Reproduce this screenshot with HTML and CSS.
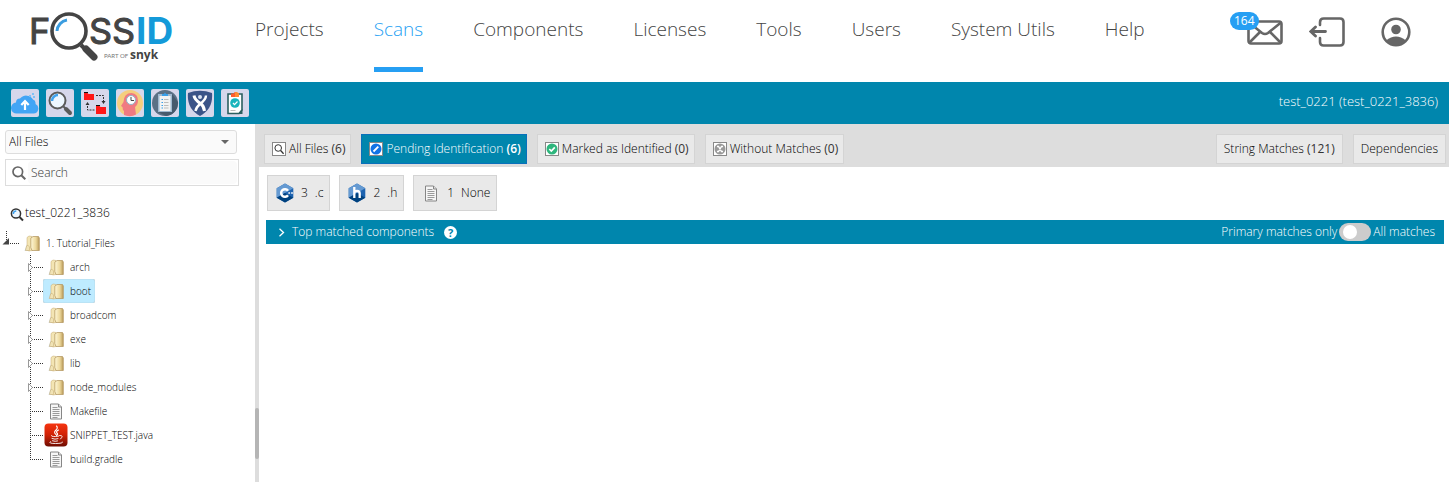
FILE: index.html
```html
<!DOCTYPE html>
<html lang="en">
<head>
<meta charset="utf-8">
<title>FossID Scans</title>
<link rel="stylesheet" href="styles.css">
</head>
<body>
<svg class="defs" aria-hidden="true">
  <defs>
    <linearGradient id="gold" x1="0" x2="1"><stop offset="0" stop-color="#fff8d8"/><stop offset=".6" stop-color="#ecd79a"/><stop offset="1" stop-color="#b99a5a"/></linearGradient>
    <linearGradient id="red" x1="0" y1="0" x2="0" y2="1"><stop offset="0" stop-color="#f63410"/><stop offset=".5" stop-color="#cf2206"/><stop offset="1" stop-color="#6e0d02"/></linearGradient>
    <symbol id="folder" viewBox="0 0 16 17">
      <path d="M.5 15.800L3.500 8l3 2v6z" fill="#c9d2d6"/>
      <path d="M3 2.500L5 1l3 .5v14l-3 .5-2-1z" fill="#f3e5b4" stroke="#c4ab70" stroke-width=".5"/>
      <path d="M6.800 3.200L9 1.500h5.500L15.300 3v12.500H8l-1.200-3z" fill="url(#gold)" stroke="#b0925a" stroke-width=".7"/>
      <path d="M2.500 11l1.500-.8 1.500 1.800v3.500H1.500z" fill="#f1e3b5" stroke="#c4ab70" stroke-width=".5"/>
    </symbol>
    <symbol id="file" viewBox="0 0 14 17">
      <path d="M1.500 1h8l3 3v12h-11z" fill="#f6f6f6" stroke="#868686"/>
      <path d="M9.500 1v3h3" fill="#ddd" stroke="#868686"/>
      <path d="M3.500 4.500h5M3.500 6.500h7M3.500 8.500h7M3.500 10.500h7M3.500 12.500h7M3.500 14.500h5" stroke="#9a9a9a"/>
    </symbol>
    <symbol id="branch" viewBox="0 0 24 24">
      <path d="M11.500 0v24M13 12.500h11" class="dots"/>
      <path d="M9.500 8.500l4 4-4 4z" fill="#fff" stroke="#999"/>
    </symbol>
    <symbol id="leaf" viewBox="0 0 24 24"><path d="M11.500 0v24M13 12.500h11" class="dots"/></symbol>
    <symbol id="last" viewBox="0 0 24 24"><path d="M11.500 0v13M11 12.500h13" class="dots"/></symbol>
    <symbol id="lens" viewBox="0 0 28 28">
      <circle cx="11.500" cy="11.500" r="8" fill="#eef7ff" stroke="#5b5b5b" stroke-width="2"/>
      <path d="M6 12a6 6 0 0 1 6-6" fill="none" stroke="#3fa2ee" stroke-width="2.500"/>
      <path d="M17.500 17.500l2.500 2.500" stroke="#5b5b5b" stroke-width="2"/>
      <path d="M20 20l4 4" stroke="#5b5b5b" stroke-width="4" stroke-linecap="round"/>
    </symbol>
    <symbol id="hex" viewBox="0 0 18 20">
      <path d="M9 .5l8.300 4.800v9.400L9 19.500.7 14.700V5.300z" fill="#1d63b0"/>
      <path d="M9 .5l8.300 4.800L9 10 .7 14.700V5.300z" fill="#659ad2"/>
      <path d="M.7 14.700L9 10l8.300 4.700L9 19.500z" fill="#00427e"/>
    </symbol>
  </defs>
</svg>

<header class="header">
  <a class="logo" href="#" aria-label="FossID part of Snyk">
    <svg width="150" height="56" viewBox="0 0 150 56">
      <g class="logo-text">
        <text x="1" y="36">F</text>
        <text x="61" y="36">SS</text>
        <text class="logo-id" x="108" y="36">ID</text>
      </g>
      <text class="logo-part" x="76" y="50">PART OF</text>
      <text class="logo-snyk" x="102" y="51">snyk</text>
      <circle cx="41" cy="23" r="17" fill="#fff" stroke="#444" stroke-width="3.600"/>
      <path d="M29 23a12 12 0 0 1 10-11" fill="none" stroke="#3b9de0" stroke-width="3"/>
      <path d="M53 37l4 4" stroke="#444" stroke-width="4"/>
      <path d="M58 41l8 8" stroke="#444" stroke-width="7" stroke-linecap="round"/>
    </svg>
  </a>
  <nav class="nav">
    <a href="#">Projects</a>
    <a href="#" class="active">Scans</a>
    <a href="#">Components</a>
    <a href="#">Licenses</a>
    <a href="#">Tools</a>
    <a href="#">Users</a>
    <a href="#">System Utils</a>
    <a href="#">Help</a>
  </nav>
  <div class="account">
    <button class="mail" aria-label="Messages">
      <svg width="36" height="25" viewBox="0 0 36 25" fill="none" stroke="#666" stroke-width="2.600">
        <rect x="1.500" y="1.500" width="33" height="22" rx="2.500"/>
        <path d="M2 2.500l13 10.500q3 2 6 0L34 2.500M2.500 22.500L13 12M33.500 22.500L23 12"/>
      </svg>
      <span class="count">164</span>
    </button>
    <button aria-label="Log out">
      <svg width="36" height="30" viewBox="0 0 36 30" fill="none" stroke="#666" stroke-width="2.600" stroke-linecap="round">
        <path d="M11 8V5.200Q11 1.500 14.700 1.500H31Q34.500 1.500 34.500 5V25q0 3.500-3.500 3.500H14.500Q11 28.500 11 25V21"/>
        <path d="M16.500 14.500H2M6.500 10L1.800 14.500l4.700 4.500" stroke-width="2.800"/>
      </svg>
    </button>
    <button aria-label="Profile">
      <svg width="30" height="30" viewBox="0 0 30 30">
        <circle cx="15" cy="15" r="13.300" fill="#fff" stroke="#666" stroke-width="2.600"/>
        <circle cx="15" cy="12.500" r="4.800" fill="#666"/>
        <path d="M5 23.500q10-8 20 0A13 13 0 0 1 5 23.500z" fill="#666"/>
      </svg>
    </button>
  </div>
</header>

<div class="toolbar">
  <div class="tools">
    <button aria-label="Upload"><svg viewBox="0 0 28 28">
      <path d="M6 24.500a5.500 5.500 0 0 1-1-11 4 4 0 0 1 4-4A8 8 0 0 1 22 10.500q3 1 2.500 4.500a5 5 0 0 1-2 9.500z" fill="#42a5f5"/>
      <path d="M14 21v-7M10.300 16l3.700-4 3.700 4" fill="none" stroke="#fff" stroke-width="2.200"/>
      <path d="M18 6h2v2h-2zM21 4h2v2h-2zM22 7h2v2h-2z" fill="#7fc1f5"/></svg></button>
    <button aria-label="Scan"><svg viewBox="0 0 28 28"><use href="#lens"/></svg></button>
    <button aria-label="Compare folders"><svg viewBox="0 0 28 28">
      <path d="M3 3h4v1H3zM15 16h4v1h-4z" fill="#111"/><path d="M3 4h3.500l1 1H13v6H3zM15 17h3.500l1 1H25v7H15z" fill="#ff1717"/>
      <path d="M15 6.500h7.500V13M6.500 14v7h7" fill="none" stroke="#333" stroke-dasharray="2 1"/>
      <path d="M20.500 12h4l-2 3zM4.500 16h4l-2-3z" fill="#333"/></svg></button>
    <button aria-label="Knowledge"><svg viewBox="0 0 28 28">
      <circle cx="14" cy="14" r="13" fill="#f5ce7e"/>
      <path d="M8 26V21.500H7L6.500 18 5 17l2.500-4Q8 4 15.500 4 22 4.500 22 11.500q0 4-3 6.500l1 7.500Q14 28.500 8 26z" fill="#f07a82"/>
      <circle cx="15" cy="11" r="4.500" fill="#fff" stroke="#8fb5c9"/><path d="M15 8v3.500h3" fill="none" stroke="#444"/></svg></button>
    <button aria-label="Report"><svg viewBox="0 0 28 28">
      <circle cx="14" cy="14" r="13" fill="#5b7186"/><path d="M21 5l6 8a13 13 0 0 1-12 14l-8-4z" fill="#475b6d"/>
      <path d="M7 5h14v18H7z" fill="#9fb9d0"/><path d="M8.500 7h11v15h-11z" fill="#f3f3f3"/><path d="M11 7V5h2q1-2.500 2 0h2v2z" fill="#3a9fe8"/>
      <path d="M10.500 10.500h1.500M10.500 13.500h1.500M10.500 16.500h1.500M10.500 19h1.500" stroke="#3a9fe8"/><path d="M13 10.500h4.500M13 13.500h4.500M13 16.500h4.500M13 19h4.500" stroke="#bbb"/></svg></button>
    <button aria-label="Issue tracker"><svg viewBox="0 0 28 28">
      <path d="M2 4Q14-.5 26 4q1.500 16-12 23Q.5 20 2 4z" fill="#3b5488"/>
      <path d="M8 6.500q.5 4 6.500 8 3.500 2.500 4 7.500" fill="none" stroke="#fff" stroke-width="3"/>
      <path d="M20 6.500q0 4-6 8.500-4 3.500-4.500 7" fill="none" stroke="#fff" stroke-width="2.400"/><circle cx="14" cy="8" r="2" fill="#dbe3f1"/></svg></button>
    <button aria-label="Audit"><svg viewBox="0 0 28 28">
      <path d="M7 5h14v16l-3 3.500H7z" fill="#fff" stroke="#2c5f60" stroke-width="1.600"/><path d="M21.500 20v5H17z" fill="#2c5f60"/>
      <path d="M10 8V4.500h2.500q1.500-3 3 0H18V8z" fill="#ff5b2e"/><path d="M14 3h2l2 1.500V8h-4z" fill="#ff8a33"/>
      <circle cx="14" cy="14" r="4.800" fill="#19b4bd"/><path d="M12 14l1.500 1.700 3-3.200" fill="none" stroke="#fff" stroke-width="1.200"/>
      <path d="M9.500 21.500h5" stroke="#bbb"/></svg></button>
  </div>
  <span>test_0221 (test_0221_3836)</span>
</div>

<div class="workspace">
  <aside class="sidebar">
    <div class="select-wrap">
      <select aria-label="File filter"><option>All Files</option></select>
    </div>
    <label class="search">
      <svg width="14" height="14" viewBox="0 0 14 14" fill="none" stroke="#666" stroke-width="1.700"><circle cx="5.800" cy="5.800" r="4.800"/><path d="M9.300 9.300l4 4" stroke-width="2"/></svg>
      <input type="text" placeholder="Search" aria-label="Search">
    </label>
    <div class="scan-name">
      <svg width="15" height="15" viewBox="0 0 15 15"><circle cx="6" cy="6.500" r="4.600" fill="#eef7ff" stroke="#333" stroke-width="1.500"/><path d="M3.300 7a3 3 0 0 1 3-3" fill="none" stroke="#3fa2ee" stroke-width="1.500"/><path d="M9.500 10l3.500 3.500" stroke="#333" stroke-width="2"/></svg>
      <span>test_0221_3836</span>
    </div>
    <ul class="tree">
      <li>
        <div class="row">
          <button aria-label="Collapse 1. Tutorial_Files"><svg width="19" height="24" viewBox="0 0 19 24"><path d="M6.500 0v9M10 12.500h9" class="dots"/><path d="M9 7v6.500H2.500z" fill="#444"/></svg></button>
          <a href="#"><span class="icon"><svg width="16" height="17"><use href="#folder"/></svg></span>1. Tutorial_Files</a>
        </div>
        <ul>
          <li class="row"><button aria-label="Expand arch"><svg width="24" height="24"><use href="#branch"/></svg></button><a href="#"><span class="icon"><svg width="16" height="17"><use href="#folder"/></svg></span>arch</a></li>
          <li class="row"><button aria-label="Expand boot"><svg width="24" height="24"><use href="#branch"/></svg></button><a href="#" class="selected"><span class="icon"><svg width="16" height="17"><use href="#folder"/></svg></span>boot</a></li>
          <li class="row"><button aria-label="Expand broadcom"><svg width="24" height="24"><use href="#branch"/></svg></button><a href="#"><span class="icon"><svg width="16" height="17"><use href="#folder"/></svg></span>broadcom</a></li>
          <li class="row"><button aria-label="Expand exe"><svg width="24" height="24"><use href="#branch"/></svg></button><a href="#"><span class="icon"><svg width="16" height="17"><use href="#folder"/></svg></span>exe</a></li>
          <li class="row"><button aria-label="Expand lib"><svg width="24" height="24"><use href="#branch"/></svg></button><a href="#"><span class="icon"><svg width="16" height="17"><use href="#folder"/></svg></span>lib</a></li>
          <li class="row"><button aria-label="Expand node_modules"><svg width="24" height="24"><use href="#branch"/></svg></button><a href="#"><span class="icon"><svg width="16" height="17"><use href="#folder"/></svg></span>node_modules</a></li>
          <li class="row"><svg width="24" height="24"><use href="#leaf"/></svg><a href="#"><span class="icon"><svg width="14" height="17"><use href="#file"/></svg></span>Makefile</a></li>
          <li class="row"><svg width="24" height="24"><use href="#leaf"/></svg><a href="#"><span class="icon"><svg width="24" height="24" viewBox="0 0 24 24">
            <rect x=".5" y=".5" width="23" height="23" rx="4" fill="url(#red)"/>
            <g fill="none" stroke="#fff" stroke-linecap="round"><path d="M12.500 3q2 2-1 4.500-2 2 .5 4M14.500 7q-3 1.500-1.500 3t-.5 2.500" stroke-width="1.100"/><path d="M7.500 12.500q-1 1.300 4 1t4.500-1M8 15.500q3 1.300 6 .2M8.500 17.800q3 1 5 .2M16.500 12.500q3.500 0 0 3.500M6.500 18.500q-3 2 5 2t7-1.500" stroke-width=".9"/></g></svg></span>SNIPPET_TEST.java</a></li>
          <li class="row"><svg width="24" height="24"><use href="#last"/></svg><a href="#"><span class="icon"><svg width="14" height="17"><use href="#file"/></svg></span>build.gradle</a></li>
        </ul>
      </li>
    </ul>
  </aside>
  <div class="splitter"><div class="grip"></div></div>
  <main class="main">
    <div class="tabs">
      <button><svg width="14" height="14" viewBox="0 0 14 14"><rect x=".5" y=".5" width="13" height="13" fill="#fff" stroke="#888"/><circle cx="6.200" cy="6" r="3.300" fill="none" stroke="#333"/><path d="M8.600 8.500l3 3.200" stroke="#333" stroke-width="1.300"/></svg><span>All Files <b>(6)</b></span></button>
      <button class="current"><svg width="14" height="14" viewBox="0 0 14 14"><rect x=".5" y=".5" width="13" height="13" fill="#fff" stroke="#888"/><circle cx="7" cy="7" r="5.500" fill="#1173e6"/><path d="M4.500 9.500l4.800-4.800" stroke="#fff" stroke-width="1.800"/></svg><span>Pending Identification <b>(6)</b></span></button>
      <button><svg width="14" height="14" viewBox="0 0 14 14"><rect x=".5" y=".5" width="13" height="13" fill="#fff" stroke="#888"/><circle cx="7" cy="7" r="5.500" fill="#2eb67d"/><path d="M4.300 7l2 2 3.500-3.700" fill="none" stroke="#fff" stroke-width="1.700"/></svg><span>Marked as Identified <b>(0)</b></span></button>
      <button><svg width="14" height="14" viewBox="0 0 14 14"><rect x=".5" y=".5" width="13" height="13" fill="#fff" stroke="#888"/><circle cx="7" cy="7" r="5.500" fill="#999"/><path d="M4 4.500h1.500l3 5H10M4 9.500h1.500l3-5H10" fill="none" stroke="#fff" stroke-width="1.300"/></svg><span>Without Matches <b>(0)</b></span></button>
      <button class="plain push"><span>String Matches <b>(121)</b></span></button>
      <button class="plain">Dependencies</button>
    </div>
    <div class="types">
      <button><svg width="18" height="20" viewBox="0 0 18 20"><use href="#hex"/><path d="M12 7.700a3.800 3.800 0 1 0 0 4.600" fill="none" stroke="#fff" stroke-width="2.500"/><path d="M12.200 10h2M13.200 9v2M15 10h2M16 9v2" stroke="#fff" stroke-width=".8"/></svg><span>3</span><span>.c</span></button>
      <button><svg width="18" height="20" viewBox="0 0 18 20"><use href="#hex"/><path d="M6.300 4v11M6.300 10q0-2 2.700-2t2.700 2.500V15" fill="none" stroke="#fff" stroke-width="2.300"/></svg><span>2</span><span>.h</span></button>
      <button><svg width="18" height="17"><use href="#file"/></svg><span>1</span><span>None</span></button>
    </div>
    <section class="matched">
      <button class="expand"><svg width="7" height="9" viewBox="0 0 7 9"><path d="M1.500.8L5.500 4.500l-4 3.700" fill="none" stroke="#fff" stroke-width="1.300"/></svg>Top matched components</button>
      <button class="help" aria-label="Help">?</button>
      <label class="switch">Primary matches only<input type="checkbox" role="switch">All matches</label>
    </section>
  </main>
</div>
</body>
</html>
```

FILE: styles.css
```css
* { box-sizing: border-box; }
body {
  margin: 0;
  min-height: 100vh;
  display: flex;
  flex-direction: column;
  background: #fff;
  color: #000;
  font: 300 12px/16px "Open Sans", sans-serif;
}
button {
  margin: 0;
  padding: 0;
  border: 0;
  background: none;
  color: inherit;
  font: inherit;
}
a { color: inherit; text-decoration: none; }
b { font-weight: 400; }
svg { display: block; flex: none; }
ul { list-style: none; margin: 0; padding: 0; }
.defs { position: absolute; width: 0; height: 0; }
.dots { fill: none; stroke: #333; stroke-dasharray: 1 1; }

.header { display: flex; align-items: flex-start; height: 82px; padding: 8px 38px 0 28px; }
.logo-text { font: 400 36px "Inter", sans-serif; fill: #444; stroke: #444; stroke-width: 1px; }
.logo-id { font-size: 37px; font-weight: 700; fill: #149ad9; stroke: none; }
.logo-part { font: 400 6px "Lato", sans-serif; fill: #777; }
.logo-snyk { font: 700 12px "Open Sans", sans-serif; fill: #444; }
.nav { display: flex; gap: 50px; margin-left: 77px; color: #444; font-size: 19px; line-height: 26px; }
.nav a { height: 64px; padding-top: 8px; }
.nav .active { color: #269ff3; border-bottom: 5px solid #269ff3; }
.account { display: flex; align-items: center; gap: 26px; margin-left: auto; padding-top: 9px; }
.account button + button + button { margin-left: 10px; }
.mail { position: relative; }
.count {
  position: absolute;
  left: -17px;
  top: -8px;
  padding: 0 4px;
  border-radius: 9px;
  background: #269ff3;
  color: #fff;
  font-size: 12px;
  font-weight: 400;
  line-height: 18px;
}

.toolbar {
  display: flex;
  align-items: center;
  justify-content: space-between;
  height: 42px;
  padding: 0 11px;
  background: #0086ad;
  color: #fff;
  font-size: 13px;
}
.toolbar span { padding-bottom: 4px; }
.tools { display: flex; gap: 7px; }
.tools button { width: 28px; height: 28px; border-radius: 2px; background: #d6d7eb; }

.workspace { flex: 1; display: flex; }
.sidebar { width: 255px; padding-top: 6px; }
.select-wrap { position: relative; width: 232px; margin: 0 0 5px 5px; }
.select-wrap::after {
  content: "";
  position: absolute;
  right: 8px;
  top: 10px;
  border: 4px solid transparent;
  border-top-color: #666;
}
.select-wrap select {
  display: block;
  appearance: none;
  width: 100%;
  height: 24px;
  padding: 0 3px;
  border: 1px solid #ddd;
  border-radius: 3px;
  background: #fafafa;
  color: #000;
  font: inherit;
}
.search {
  display: flex;
  align-items: center;
  gap: 2px;
  width: 234px;
  height: 27px;
  margin-left: 5px;
  padding: 0 1px 0 6px;
  border: 1px solid #ddd;
}
.search input {
  flex: 1;
  min-width: 0;
  height: 23px;
  padding: 0 3px;
  border: 0;
  border-radius: 4px;
  background: #fafafa;
  font: inherit;
}
.search input::placeholder { color: #333; opacity: 1; }
.scan-name { display: flex; align-items: center; padding: 18px 0 9px 10px; }
.scan-name svg { margin-top: 3px; }
.tree { font-size: 10px; color: #000; }
.tree ul { margin-left: 19px; }
.row { display: flex; height: 24px; }
.row a { display: flex; align-items: center; gap: 2px; padding-right: 4px; }
.row .selected { background: #beebff; border-radius: 2px; box-shadow: inset 0 0 1px #999; }
.icon { width: 25px; display: flex; justify-content: center; }

.splitter { display: flex; flex-direction: column; justify-content: flex-end; width: 4px; padding-bottom: 23px; background: #ddd; }
.grip { height: 51px; border-radius: 2px; background: #b5b5b5; }

.main { flex: 1; }
.tabs { display: flex; gap: 10px; height: 43px; padding: 10px 3px 3px 5px; background: #ddd; }
.tabs button {
  display: flex;
  align-items: center;
  gap: 3px;
  padding: 0 5px 0 7px;
  border: 1px solid #d4d4d4;
  background: #e9e9e9;
  color: #000;
}
.tabs b { color: #333; }
.tabs .plain { padding: 0 7px; }
.tabs .current { border-color: #0a70bb; background: #0086ad; color: #fff; }
.tabs .current b { color: #fff; font-weight: 600; }
.tabs .push { margin-left: auto; }
.types { display: flex; gap: 9px; padding: 8px 8px 9px; }
.types button {
  display: flex;
  align-items: center;
  gap: 7px;
  height: 36px;
  padding: 0 6px 0 8px;
  border: 1px solid #d4d4d4;
  background: #e9e9e9;
  color: #000;
}
.matched {
  display: flex;
  align-items: center;
  height: 24px;
  margin: 0 5px 0 7px;
  padding: 0 9px 0 12px;
  background: #0086ad;
  color: #fff;
}
.expand { display: flex; align-items: center; gap: 7px; }
.help {
  width: 13px;
  height: 13px;
  margin-left: 10px;
  border-radius: 50%;
  background: #fff;
  color: #0086ad;
  font-size: 11px;
  font-weight: 700;
  line-height: 13px;
}
.switch { display: flex; align-items: center; gap: 2px; margin-left: auto; }
.switch input {
  appearance: none;
  display: flex;
  width: 32px;
  height: 18px;
  margin: 0;
  padding: 2px 4px;
  border-radius: 9px;
  background: #ccc;
}
.switch input::before { content: ""; width: 14px; height: 14px; border-radius: 50%; background: #fff; }
.switch input:checked { justify-content: flex-end; background: #269ff3; }
```
